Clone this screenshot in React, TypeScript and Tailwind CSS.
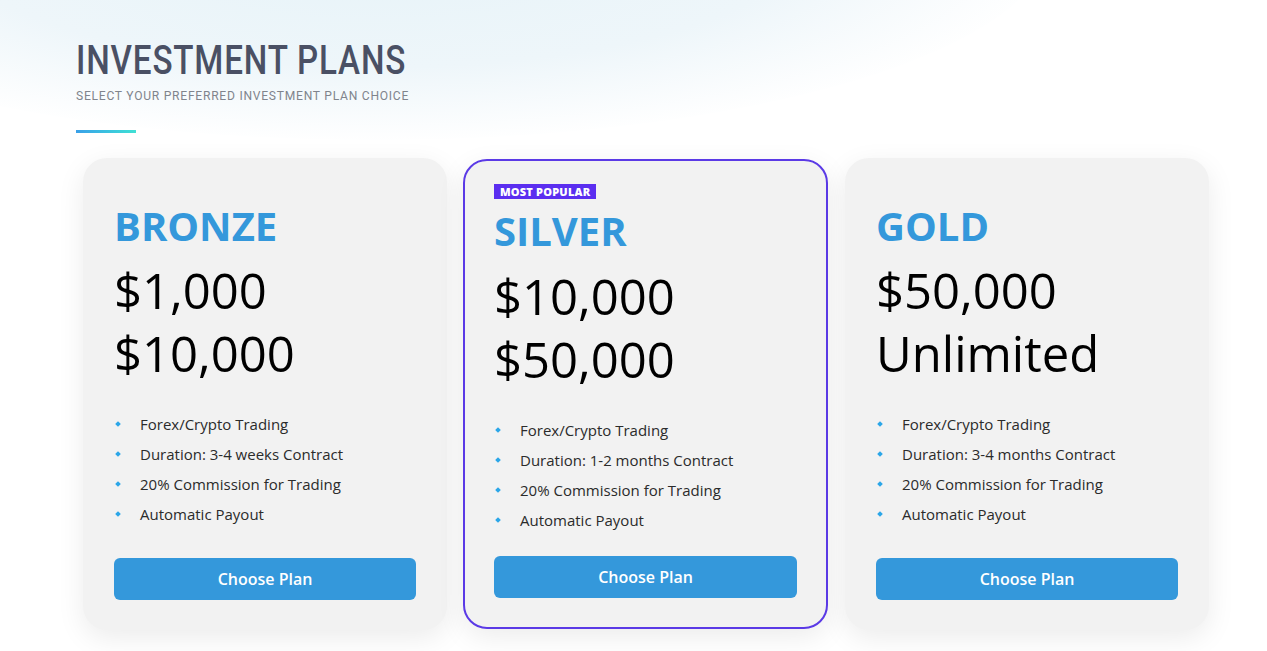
import React from "react";

type Plan = {
  name: string;
  lines: [string, string];
  duration: string;
  popular?: boolean;
};

const plans: Plan[] = [
  { name: "BRONZE", lines: ["$1,000", "$10,000"], duration: "Duration: 3-4 weeks Contract" },
  { name: "SILVER", lines: ["$10,000", "$50,000"], duration: "Duration: 1-2 months Contract", popular: true },
  { name: "GOLD", lines: ["$50,000", "Unlimited"], duration: "Duration: 3-4 months Contract" },
];

const body = { fontFamily: '"Open Sans", "Noto Sans", sans-serif' };
const narrow = { fontFamily: 'Roboto, "Liberation Sans", sans-serif' };

function Card({ plan }: { plan: Plan }) {
  const features = ["Forex/Crypto Trading", plan.duration, "20% Commission for Trading", "Automatic Payout"];
  return (
    <div
      className={
        "flex flex-col rounded-[24px] bg-[#f2f2f2] shadow-[0_8px_28px_rgba(0,0,0,0.08)] " +
        (plan.popular
          ? "my-px -ml-px border-2 border-[#5b3ae6] px-[29px] pt-[23px] pb-[29px]"
          : "px-[31px] pt-[44px] pb-[30px]")
      }
      style={body}
    >
      {plan.popular && (
        <div className="mb-[8px] flex">
          <span className="bg-[#5b2ef0] px-[6px] text-[11px] font-extrabold uppercase leading-[15px] tracking-[0.2px] text-white">
            Most Popular
          </span>
        </div>
      )}
      <h3 className="text-[40px] font-bold leading-[48px] text-[#3498db]">{plan.name}</h3>
      <div className={"text-[49px] leading-[63px] text-black " + (plan.popular ? "mt-[10px]" : "mt-[9px]")}>
        <div>{plan.lines[0]}</div>
        <div>{plan.lines[1]}</div>
      </div>
      <ul className={"mt-[24px] " + (plan.popular ? "mb-[21px]" : "mb-[29px]")}>
        {features.map((f) => (
          <li key={f} className="flex items-center text-[15px] leading-[30px] text-[#2b2b2b]">
            <span className="ml-[2px] mr-[20px] inline-block h-[4px] w-[4px] rotate-45 bg-[#2ba6e8]" />
            {f}
          </li>
        ))}
      </ul>
      <button className="mt-auto h-[42px] w-full rounded-[6px] bg-[#3498db] text-[16px] font-semibold text-white">
        Choose Plan
      </button>
    </div>
  );
}

export default function App() {
  return (
    <div className="relative min-h-[651px] w-full overflow-hidden bg-white">
      <div className="pointer-events-none absolute left-[-300px] top-[-260px] h-[400px] w-[1350px] rounded-[50%] bg-[radial-gradient(ellipse_at_center,#e6f3f8_0%,#eef6fa_45%,rgba(255,255,255,0)_72%)]" />
      <div className="relative">
        <div className="pl-[76px] pt-[38px]">
          <h2
            className="origin-left scale-x-[0.81] text-[41px] font-medium leading-[44px] tracking-[1px] text-[#4a5064]"
            style={narrow}
          >
            INVESTMENT PLANS
          </h2>
          <p
            className="mt-[6px] origin-left scale-x-[0.93] text-[13px] leading-[16px] tracking-[0.8px] text-[#80848c]"
            style={narrow}
          >
            SELECT YOUR PREFERRED INVESTMENT PLAN CHOICE
          </p>
          <div className="mt-[26px] h-[3px] w-[60px] bg-gradient-to-r from-[#3aa0e8] to-[#40e0d4]" />
        </div>
        <div className="ml-[83px] mt-[25px] grid w-[1126px] grid-cols-3 gap-[17px]">
          {plans.map((p) => (
            <Card key={p.name} plan={p} />
          ))}
        </div>
      </div>
    </div>
  );
}
